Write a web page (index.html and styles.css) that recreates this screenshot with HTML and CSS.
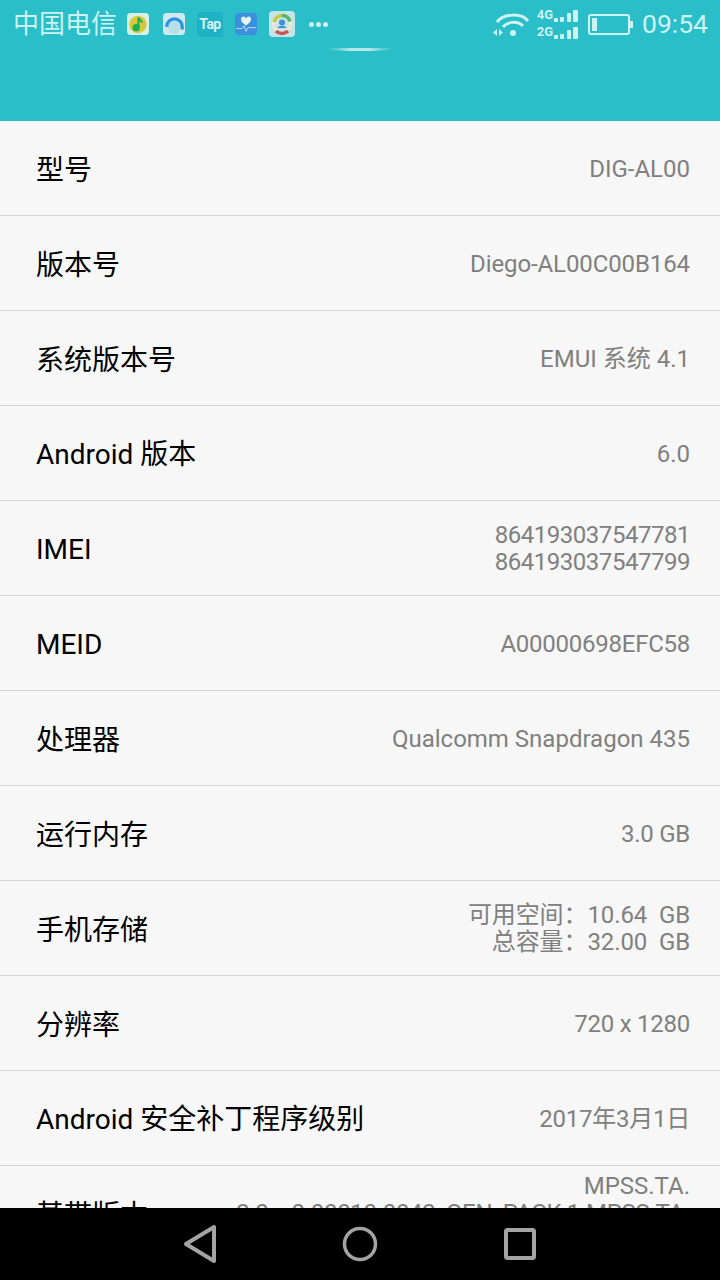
FILE: index.html
```html
<!DOCTYPE html>
<html lang="zh">
<head>
<meta charset="utf-8">
<title>关于手机</title>
<link rel="stylesheet" href="styles.css">
</head>
<body>
<div class="screen">
  <header class="header">
    <div class="status">
      <div class="status-left">
        <span class="carrier">中国电信</span>
        <svg class="app" width="22" height="22" viewBox="0 0 24 24"><rect width="24" height="24" rx="4" fill="#d8efe6"/><circle cx="12" cy="12.500" r="9.500" fill="#d9c83a"/><circle cx="10" cy="16" r="4" fill="#16b05a"/><path d="M12.500 16V5c1 2.500 3.500 3 4 5.500" fill="none" stroke="#16b05a" stroke-width="2.400"/></svg>
        <svg class="app app-gap" width="22" height="22" viewBox="0 0 24 24"><rect width="24" height="24" rx="4" fill="#cfe9ef"/><circle cx="12" cy="16" r="7" fill="#b7dfe6"/><path d="M4 15a8.500 8.500 0 0 1 17 0v3" fill="none" stroke="#2a93e0" stroke-width="3.500"/></svg>
        <span class="tap">Tap</span>
        <svg class="app" width="22" height="22" viewBox="0 0 24 24"><rect width="24" height="24" rx="4" fill="#3c8fdc"/><path d="M12 13.500c-3-2-5.500-4-5.500-7 0-3.500 4.500-3.500 5.500-.5 1-3 5.500-3 5.500.5 0 3-2.500 5-5.500 7z" fill="#e4f4fb"/><path d="M1 17h7l2-3 2 6 2-4h9" fill="none" stroke="#bfe4f2" stroke-width="1"/></svg>
        <svg class="app" width="26" height="26" viewBox="0 0 26 26"><rect width="26" height="26" rx="4" fill="#c5e4e8"/><circle cx="13" cy="13" r="8.500" fill="none" stroke="#e5ead8" stroke-width="3.500"/><path d="M5 11a8.500 8.500 0 0 1 8-6.500" fill="none" stroke="#c6c83a" stroke-width="3.500"/><path d="M13 4.500a8.500 8.500 0 0 1 8 6" fill="none" stroke="#58b568" stroke-width="3.500"/><path d="M7 20a8.500 8.500 0 0 0 12 0" fill="none" stroke="#c9564e" stroke-width="3.500"/><circle cx="13" cy="11.500" r="3" fill="#3f8fdc"/><path d="M8.500 17c1-3 8-3 9 0z" fill="#3f8fdc"/></svg>
        <span class="dots"><i></i><i></i><i></i></span>
      </div>
      <div class="status-right">
        <svg class="wifi" width="38" height="26" viewBox="0 0 38 26"><g fill="none" stroke="#cdf3f3" stroke-width="3"><path d="M5 11C12 2 30 2 36 10"/><path d="M11 16c5-6 15-6 20-1"/></g><circle cx="21" cy="22" r="3" fill="#cdf3f3"/><path d="M5 18v7l-4-3.500zM7 18v7l4-3.500z" fill="#cdf3f3"/></svg>
        <div class="signal">
          <div class="sig-row"><span class="net">4G</span><span class="bars"><i class="b1"></i><i class="b2"></i><i class="b3"></i><i class="b4"></i></span></div>
          <div class="sig-row"><span class="net">2G</span><span class="bars"><i class="b1"></i><i class="b2"></i><i class="b3"></i><i class="b4"></i></span></div>
        </div>
        <div class="battery"><span class="level"></span></div>
        <span class="time">09:54</span>
      </div>
    </div>
    <div class="glow"></div>
  </header>
  <main class="list">
    <div class="row"><span class="label">型号</span><span class="value">DIG-AL00</span></div>
    <div class="row"><span class="label">版本号</span><span class="value hair">Diego-AL00C00B164</span></div>
    <div class="row"><span class="label">系统版本号</span><span class="value">EMUI 系统 4.1</span></div>
    <div class="row"><span class="label latin">Android 版本</span><span class="value">6.0</span></div>
    <div class="row"><span class="label latin">IMEI</span><span class="value tight">864193037547781<br>864193037547799</span></div>
    <div class="row"><span class="label latin">MEID</span><span class="value snug">A00000698EFC58</span></div>
    <div class="row"><span class="label">处理器</span><span class="value">Qualcomm Snapdragon 435</span></div>
    <div class="row"><span class="label">运行内存</span><span class="value snug">3.0 GB</span></div>
    <div class="row"><span class="label">手机存储</span><span class="value hair">可用空间：10.64&nbsp; GB<br>总容量：32.00&nbsp; GB</span></div>
    <div class="row"><span class="label">分辨率</span><span class="value snug">720 x 1280</span></div>
    <div class="row"><span class="label latin">Android 安全补丁程序级别</span><span class="value snug">2017年3月1日</span></div>
    <div class="row"><span class="label">基带版本</span><span class="value baseband">MPSS.TA.<br><span class="long">2.3_c8.00010.0042_GEN_PACK-1.MPSS.TA.</span><br>2.3</span></div>
  </main>
  <nav class="nav">
    <svg width="36" height="40" viewBox="0 0 36 40"><path d="M33 3v34L5 20z" fill="none" stroke="#a3a3a3" stroke-width="4" stroke-linejoin="round"/></svg>
    <svg width="36" height="36" viewBox="0 0 36 36"><circle cx="18" cy="18" r="15.500" fill="none" stroke="#a3a3a3" stroke-width="3.500"/></svg>
    <svg width="34" height="34" viewBox="0 0 34 34"><rect x="3" y="3" width="28" height="28" rx="1.500" fill="none" stroke="#a3a3a3" stroke-width="4"/></svg>
  </nav>
</div>
</body>
</html>
```
FILE: styles.css
```css
* { box-sizing: border-box; }
html, body { margin: 0; padding: 0; }
body { font-family: Roboto, "Noto Sans CJK SC", sans-serif; background: #f7f7f7; }
.screen { width: 720px; height: 1280px; display: flex; flex-direction: column; overflow: hidden; }
.header { height: 121px; flex: none; background: #29bec8; position: relative; }
.status { height: 48px; display: flex; justify-content: space-between; align-items: center; padding: 0 12px 0 13px; color: #cdf3f3; }
.status-left { display: flex; align-items: center; gap: 12px; }
.status-right { display: flex; align-items: center; }
.carrier { font-size: 26px; line-height: 30px; width: 102px; white-space: nowrap; }
.app { flex: none; }
.app-gap { margin-left: 2px; }
.tap { width: 26px; height: 25px; border-radius: 4px; background: #1fb2c4; color: #d8f4f6; font-size: 14px; font-weight: 700; letter-spacing: -0.500px; display: flex; align-items: center; justify-content: center; }
.dots { display: flex; gap: 2px; margin-left: 2px; }
.dots i { width: 5px; height: 5px; border-radius: 50%; background: #cdf3f3; }
.wifi { margin-right: 7px; }
.signal { display: flex; flex-direction: column; gap: 4px; margin-right: 10px; }
.sig-row { display: flex; align-items: flex-end; height: 13px; }
.net { font-size: 13px; font-weight: 700; line-height: 11px; align-self: flex-start; width: 17px; }
.bars { display: flex; align-items: flex-end; gap: 2.400px; }
.bars i { width: 4px; background: #cdf3f3; border-radius: 1px; }
.bars .b1 { height: 4px; }
.bars .b2 { height: 5px; }
.bars .b3 { height: 9px; }
.bars .b4 { height: 12px; width: 5px; }
.battery { width: 42px; height: 21px; border: 2px solid #cdf3f3; border-radius: 3px; padding: 2px; margin-right: 12px; position: relative; }
.battery::after { content: ""; position: absolute; right: -5px; top: 5px; width: 3px; height: 7px; background: #cdf3f3; }
.level { display: block; width: 5px; height: 100%; background: #cdf3f3; }
.time { font-size: 26.500px; line-height: 30px; }
.glow { position: absolute; left: 328px; top: 48px; width: 64px; height: 3px; border-radius: 0 0 50% 50%; background: linear-gradient(90deg, #29bec8, #b6e8ea 35%, #b6e8ea 65%, #29bec8); }
.list { flex: 1; overflow: hidden; min-height: 0; }
.row { height: 95px; border-bottom: 1px solid #d4d4d4; display: flex; justify-content: space-between; align-items: center; padding: 0 30px 0 36px; }
.label { font-size: 28px; line-height: 38px; padding-top: 5px; color: #000; white-space: nowrap; flex: none; }
.latin { padding-top: 3px; }
.value { font-size: 24px; line-height: 27px; color: #808080; text-align: right; padding-top: 2px; }
.baseband { padding-top: 0; }
.tight { letter-spacing: -0.470px; }
.snug { letter-spacing: -0.250px; }
.hair { letter-spacing: -0.100px; }
.long { letter-spacing: -0.300px; }
.nav { height: 72px; flex: none; background: #000; display: flex; align-items: center; justify-content: center; gap: 125px; padding-right: 2px; }
```
